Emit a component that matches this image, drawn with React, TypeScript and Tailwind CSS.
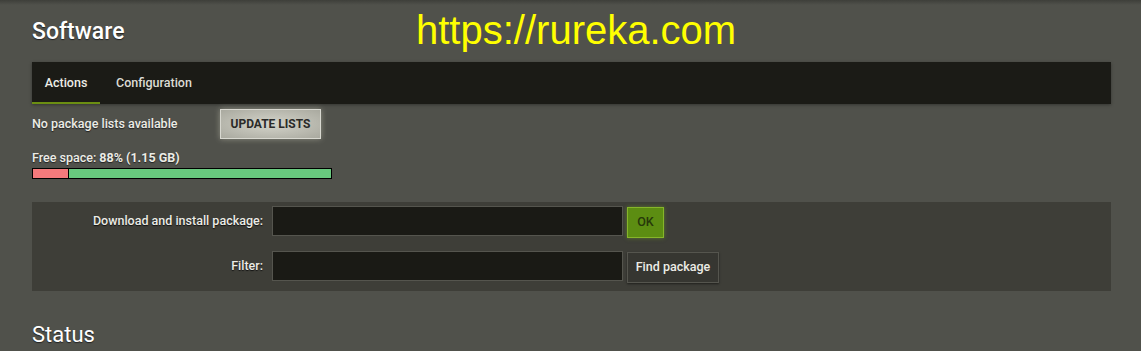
export default function App() {
  const used = 12;
  return (
    <div className="relative min-h-screen bg-[#50514b] pl-8 pr-[30px] font-['Roboto','Liberation_Sans',Arial,sans-serif] text-[#ececE6] overflow-hidden">
      <div className="absolute inset-x-0 top-0 h-[5px] bg-gradient-to-b from-[#3e3f3a] to-[#50514b]" />
      <div className="absolute left-[416px] top-[7px] text-[40px] leading-[46px] text-[#ffff00] font-['Liberation_Sans',Arial,sans-serif]">
        https://rureka.com
      </div>

      <h2 className="pt-[18px] text-[23px] font-medium leading-[28px] text-white [text-shadow:0_1px_1px_#222]">Software</h2>

      <div className="mt-[16px] flex h-[42px] bg-[#1b1b16] shadow-[0_1px_3px_rgba(0,0,0,0.35)]">
        <div className="flex w-[68px] items-center justify-center border-b-2 border-[#6b8e12] pt-[2px] text-[12.5px] font-medium text-[#ececE6]">
          Actions
        </div>
        <div className="flex items-center px-4 text-[12.5px] font-medium text-[#dcdcd4]">Configuration</div>
      </div>

      <div className="mt-[5px] flex h-[30px] items-center">
        <div className="w-[188px] text-[12.5px] font-medium [text-shadow:0_1px_1px_#222]">No package lists available</div>
        <button className="h-[30px] w-[101px] border border-[#d8d8d0] bg-[radial-gradient(ellipse_at_center,#d4d4ca,#a9a99f)] text-[12px] font-bold text-[#2a2a28] shadow-[0_0_6px_rgba(220,220,200,0.45)]">
          UPDATE LISTS
        </button>
      </div>

      <div className="mt-[11px] text-[12.5px] font-medium leading-[16px] [text-shadow:0_1px_1px_#222]">
        Free space: <span className="font-bold">88% (1.15 GB)</span>
      </div>
      <div className="mt-[2px] flex h-[11px] w-[300px] border border-black">
        <div className="h-full bg-[#f47a7c] border-r border-black" style={{ width: `${used}%` }} />
        <div className="h-full flex-1 bg-[#68c97e]" />
      </div>

      <div className="mt-[23px] flex flex-col gap-[13px] bg-[#3e3e38] pt-[4px] pb-[8px]">
        <div className="flex items-start">
          <label className="flex h-[30px] w-[232px] items-center justify-end pr-[1px] text-[12.5px] font-medium [text-shadow:0_1px_1px_#111]">
            Download and install package:
          </label>
          <input className="ml-[8px] h-[30px] w-[351px] border border-[#55554e] bg-[#1a1a15] outline-none" />
          <button className="ml-[4px] mt-[1px] h-[31px] w-[37px] border border-[#86b52a] bg-[#5c8d12] text-[12.5px] font-medium text-[#27380a] shadow-[0_0_4px_rgba(120,180,30,0.5)]">
            OK
          </button>
        </div>
        <div className="flex items-start">
          <label className="flex h-[30px] w-[232px] items-center justify-end pr-[1px] text-[12.5px] font-medium [text-shadow:0_1px_1px_#111]">
            Filter:
          </label>
          <input className="ml-[8px] h-[30px] w-[351px] border border-[#55554e] bg-[#1a1a15] outline-none" />
          <button className="ml-[4px] mt-[1px] h-[31px] w-[92px] border border-[#55554e] bg-[#363631] text-[12.5px] font-medium text-[#ececE6] shadow-[0_1px_2px_rgba(0,0,0,0.5)]">
            Find package
          </button>
        </div>
      </div>

      <h2 className="mt-[30px] text-[22px] leading-[28px] text-white [text-shadow:0_1px_1px_#222]">Status</h2>
    </div>
  );
}
